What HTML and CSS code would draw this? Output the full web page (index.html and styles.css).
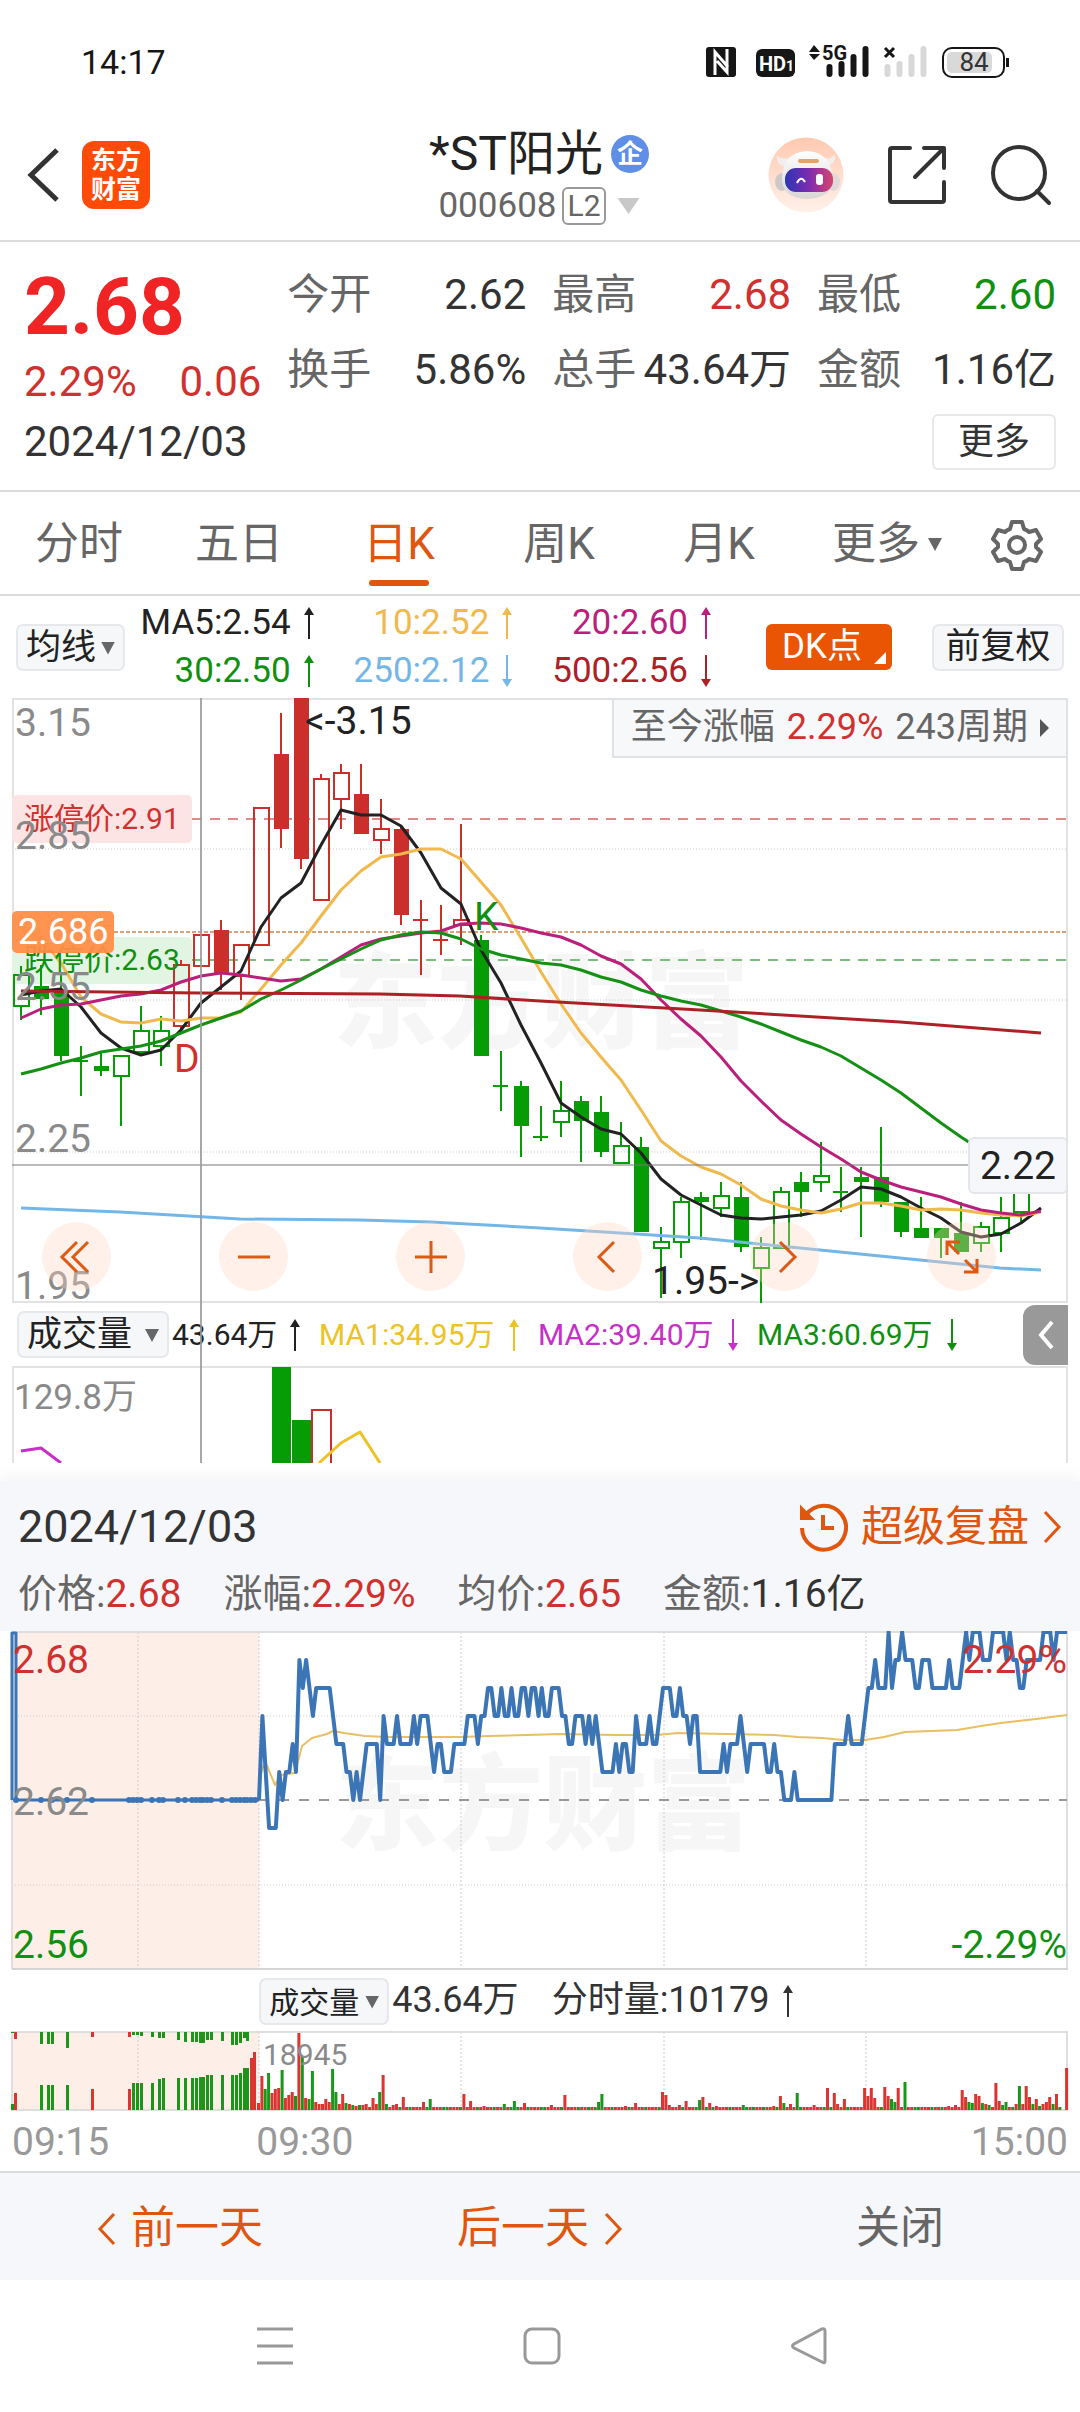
FILE: index.html
```html
<!DOCTYPE html>
<html lang="zh-CN">
<head>
<meta charset="utf-8">
<meta name="viewport" content="width=device-width, initial-scale=1">
<title>*ST阳光 000608</title>
<link rel="stylesheet" href="styles.css">
</head>
<body>
<svg class="sprite" aria-hidden="true">
  <symbol id="up" viewBox="0 0 12 32"><path d="M6 2V32" stroke="currentColor" stroke-width="2"/><path d="M6 0L11 8H1Z" fill="currentColor"/></symbol>
  <symbol id="down" viewBox="0 0 12 32"><path d="M6 0V30" stroke="currentColor" stroke-width="2"/><path d="M6 32L11 24H1Z" fill="currentColor"/></symbol>
  <symbol id="prev" viewBox="0 0 20 34"><path d="M17 2L3 17L17 32" fill="none" stroke="currentColor" stroke-width="3"/></symbol>
  <symbol id="next" viewBox="0 0 20 34"><path d="M3 2L17 17L3 32" fill="none" stroke="currentColor" stroke-width="3"/></symbol>
</svg>

<div class="status">
  <span class="clock">14:17</span>
  <svg class="status-icons" viewBox="0 0 310 36" aria-hidden="true">
    <rect x="1" y="3" width="30" height="30" rx="3" fill="#161616"/>
    <path d="M10 31V8L23 23M22 5V28L12 17" fill="none" stroke="#fff" stroke-width="3"/>
    <rect x="51" y="5" width="39" height="28" rx="6" fill="#161616"/>
    <text class="hd" x="54" y="27">HD</text><text class="hd-sub" x="81" y="27">1</text>
    <path d="M109 1L115 8H104ZM104 10H115L109 16Z" fill="#161616"/>
    <text class="net" x="117" y="16">5G</text>
    <path d="M124.500 23V30M136.500 20V30M148.500 13V30M160.500 5V30" stroke="#161616" stroke-width="6" stroke-linecap="round"/>
    <path d="M180 4L189 13M189 4L180 13" stroke="#161616" stroke-width="3"/>
    <path d="M182.500 23V30M194.500 20V30M206.500 13V30M218.500 5V30" stroke="#d8d8d8" stroke-width="6" stroke-linecap="round"/>
    <rect x="238" y="4" width="61" height="29" rx="9" fill="#fff" stroke="#161616" stroke-width="2"/>
    <rect x="242" y="8" width="45" height="21" rx="5" fill="#d9d9d9"/>
    <path d="M302.500 14V23" stroke="#161616" stroke-width="3"/>
    <text class="batt" x="269" y="27">84</text>
  </svg>
</div>

<header class="header">
  <div class="header-side">
    <button class="icon-btn" aria-label="返回"><svg width="34" height="56" viewBox="0 0 34 56"><path d="M31 3L5 28L31 53" fill="none" stroke="#333" stroke-width="5"/></svg></button>
    <a class="logo" href="#"><span>东方</span><span>财富</span></a>
  </div>
  <div class="header-title">
    <h1>*ST阳光<span class="badge">企</span></h1>
    <button class="code">000608<span class="level">L2</span><i class="tri tri-light"></i></button>
  </div>
  <div class="header-side header-actions">
    <button class="icon-btn" aria-label="智能助手">
      <svg width="76" height="76" viewBox="0 0 76 76">
        <defs>
          <linearGradient id="halo" x1="0" y1="0" x2="0" y2="1"><stop offset="0" stop-color="#ffc9b0"/><stop offset="1" stop-color="#fff1ea"/></linearGradient>
          <linearGradient id="visor"><stop offset="0" stop-color="#2c35b4"/><stop offset=".5" stop-color="#7d2cb0"/><stop offset="1" stop-color="#d8446c"/></linearGradient>
          <linearGradient id="shell" x1="0" y1="0" x2="0" y2="1"><stop offset="0" stop-color="#fff"/><stop offset="1" stop-color="#d9d5d6"/></linearGradient>
        </defs>
        <circle cx="38" cy="38" r="37.500" fill="url(#halo)"/>
        <ellipse cx="14" cy="45" rx="7" ry="9" fill="#cfc8c8"/><ellipse cx="65" cy="45" rx="7" ry="9" fill="#e0d9d9"/>
        <path d="M9 18Q8 29 18 29L24 20Q14 24 9 18ZM67 17Q68 28 60 28L54 20Q63 24 67 17Z" fill="#f3eeee"/>
        <path d="M14 40Q16 15 39 14Q62 15 65 40Q66 61 39 62Q13 61 14 40Z" fill="url(#shell)"/>
        <rect x="30" y="22" width="21" height="4" rx="2" fill="#e0a46c"/>
        <rect x="17" y="31" width="48" height="24" rx="11" fill="url(#visor)"/>
        <path d="M29 46Q33 38 37 45" fill="none" stroke="#fff" stroke-width="2"/><rect x="48" y="37" width="7" height="11" rx="3" fill="#fff"/>
      </svg>
    </button>
    <button class="icon-btn" aria-label="分享"><svg width="60" height="60" viewBox="0 0 60 60" fill="none" stroke="#333" stroke-width="4" stroke-linecap="round" stroke-linejoin="round"><path d="M23 3H5Q3 3 3 5V55Q3 57 5 57H55Q57 57 57 55V37M37 3H57V23M57 3L28 32"/></svg></button>
    <button class="icon-btn" aria-label="搜索"><svg width="62" height="62" viewBox="0 0 62 62" fill="none" stroke="#333" stroke-width="4" stroke-linecap="round"><circle cx="29" cy="29" r="26"/><path d="M47 47L59 59"/></svg></button>
  </div>
</header>

<section class="quote">
  <div class="quote-top">
    <div class="quote-price">
      <strong>2.68</strong>
      <div class="quote-change"><span>2.29%</span><span>0.06</span></div>
    </div>
    <dl class="quote-grid">
      <div><dt>今开</dt><dd>2.62</dd></div>
      <div><dt>最高</dt><dd class="red">2.68</dd></div>
      <div><dt>最低</dt><dd class="green">2.60</dd></div>
      <div><dt>换手</dt><dd>5.86%</dd></div>
      <div><dt>总手</dt><dd>43.64万</dd></div>
      <div><dt>金额</dt><dd>1.16亿</dd></div>
    </dl>
  </div>
  <div class="quote-date"><time>2024/12/03</time><button class="more">更多</button></div>
</section>

<nav class="tabs">
  <button>分时</button><button>五日</button><button class="active">日K</button><button>周K</button><button>月K</button>
  <button>更多<i class="tri"></i></button>
  <button aria-label="设置"><svg width="52" height="52" viewBox="0 0 52 52" fill="none" stroke="#666" stroke-width="4" stroke-linejoin="round"><path d="M21 3H31L33 10Q36 11 38 13L45 11L50 20L45 25V28L50 33L45 42L38 40Q36 42 33 43L31 50H21L19 43Q16 42 14 40L7 42L2 33L7 28V25L2 20L7 11L14 13Q16 11 19 10Z"/><circle cx="26" cy="26" r="8"/></svg></button>
</nav>

<main>
  <div class="ma-bar">
    <label class="picker"><select aria-label="均线指标"><option>均线</option></select></label>
    <div class="ma-grid">
      <span class="c-black">MA5:2.54<svg class="arrow"><use href="#up"/></svg></span>
      <span class="c-yellow">10:2.52<svg class="arrow"><use href="#up"/></svg></span>
      <span class="c-magenta">20:2.60<svg class="arrow"><use href="#up"/></svg></span>
      <span class="green">30:2.50<svg class="arrow"><use href="#up"/></svg></span>
      <span class="c-blue">250:2.12<svg class="arrow"><use href="#down"/></svg></span>
      <span class="c-dark">500:2.56<svg class="arrow"><use href="#down"/></svg></span>
    </div>
    <button class="dk">DK点</button>
    <button class="chip">前复权</button>
  </div>

  <div class="stack">
    <div class="kline">
      <svg id="kline" viewBox="0 698 1080 605" role="img" aria-label="日K线图"></svg>
      <button class="since">至今涨幅 <b>2.29%</b> 243周期<i></i></button>
      <output class="cross-price">2.22</output>
      <div class="tools">
        <button aria-label="最早"><svg viewBox="0 0 36 36"><path d="M18 3L3 18L18 33M29 3L14 18L29 33"/></svg></button>
        <button aria-label="缩小"><svg viewBox="0 0 36 36"><path d="M2 18H34"/></svg></button>
        <button aria-label="放大"><svg viewBox="0 0 36 36"><path d="M2 18H34M18 2V34"/></svg></button>
        <button aria-label="左移"><svg viewBox="0 0 36 36"><path d="M24 3L9 18L24 33"/></svg></button>
        <button aria-label="右移"><svg viewBox="0 0 36 36"><path d="M13 3L28 18L13 33"/></svg></button>
        <button aria-label="全屏"><svg viewBox="0 0 36 36"><path d="M3 16V3H16M3 3L15 15M33 20V33H20M33 33L21 21"/></svg></button>
      </div>
    </div>
    <div class="vol-bar">
      <label class="picker picker-wide"><select aria-label="副图指标"><option>成交量</option></select></label>
      <span class="c-black">43.64万<svg class="arrow"><use href="#up"/></svg></span>
      <span class="c-gold">MA1:34.95万<svg class="arrow"><use href="#up"/></svg></span>
      <span class="c-violet">MA2:39.40万<svg class="arrow"><use href="#down"/></svg></span>
      <span class="green">MA3:60.69万<svg class="arrow"><use href="#down"/></svg></span>
      <button class="drawer" aria-label="展开侧栏"><svg width="16" height="30" viewBox="0 0 16 30"><path d="M14 2L3 15L14 28" fill="none" stroke="#fff" stroke-width="4"/></svg></button>
    </div>
    <svg id="volume" viewBox="0 1366 1080 97" role="img" aria-label="成交量图"></svg>
    <div class="cursor"></div>
  </div>

  <section class="panel">
    <div class="panel-head">
      <time>2024/12/03</time>
      <a class="replay" href="#">
        <svg width="50" height="50" viewBox="0 0 50 50" fill="none" stroke="#e0560f" stroke-width="4"><path d="M8 13A22 22 0 1 1 4 26"/><path d="M25 13V26H36"/><path d="M3 5V17H15Z" fill="#e0560f" stroke-width="2"/></svg>
        超级复盘
        <svg class="chev"><use href="#next"/></svg>
      </a>
    </div>
    <div class="panel-meta">
      <span>价格:<b>2.68</b></span><span>涨幅:<b>2.29%</b></span><span>均价:<b>2.65</b></span><span>金额:<em>1.16亿</em></span>
    </div>
  </section>

  <svg id="intraday" viewBox="0 1631 1080 340" role="img" aria-label="分时图"></svg>
  <div class="minute-bar">
    <label class="picker picker-small"><select aria-label="分时副图指标"><option>成交量</option></select></label>
    <span>43.64万</span><span class="minute-vol">分时量:10179<svg class="arrow"><use href="#up"/></svg></span>
  </div>
  <svg id="minutes" viewBox="0 2031 1080 80" role="img" aria-label="分时成交量图"></svg>
  <div class="times"><span>09:15</span><span>09:30</span><span>15:00</span></div>
</main>

<footer class="pager">
  <button class="accent"><svg class="chev"><use href="#prev"/></svg>前一天</button>
  <button class="accent">后一天<svg class="chev"><use href="#next"/></svg></button>
  <button>关闭</button>
</footer>
<nav class="system" aria-label="系统导航">
  <button aria-label="任务"><svg width="38" height="38" viewBox="0 0 38 38"><path d="M1 2H37M1 19H37M1 36H37"/></svg></button>
  <button aria-label="主页"><svg width="38" height="38" viewBox="0 0 38 38"><rect x="2" y="2" width="34" height="34" rx="7"/></svg></button>
  <button aria-label="后退"><svg width="38" height="38" viewBox="0 0 38 38"><path d="M35 4V34Q35 37 32 35L4 21Q1 19 4 17L32 2Q35 1 35 4Z"/></svg></button>
</nav>
<script src="charts.js"></script>
</body>
</html>
```
FILE: styles.css
```css
* { box-sizing: border-box; }
body { margin: 0; background: #fff; color: #333; font: 36px/1.2 Roboto, "Noto Sans CJK SC", sans-serif; }
button, select { margin: 0; padding: 0; border: 0; background: none; color: inherit; font: inherit; appearance: none; }
a { color: inherit; text-decoration: none; }
h1, dl, dd { margin: 0; font-weight: 400; }
svg { display: block; }
svg text { font-family: Roboto, "Noto Sans CJK SC", sans-serif; }
b, em { font-weight: 400; font-style: normal; }
.sprite { position: absolute; width: 0; height: 0; }

.red { color: #d0312f; }
.green { color: #109010; }
.c-black { color: #222; }
.c-yellow { color: #f0b94e; }
.c-magenta { color: #bb1f7c; }
.c-blue { color: #74b6e6; }
.c-dark { color: #ad2026; }
.c-gold { color: #ecc224; }
.c-violet { color: #c62fc8; }

.status { display: flex; justify-content: space-between; align-items: center; height: 124px; padding: 0 65px 0 81px; }
.clock { font-size: 34px; line-height: 40px; color: #161616; }
.status-icons { width: 310px; height: 36px; }
.hd { font-size: 20px; font-weight: 700; fill: #fff; }
.hd-sub { font-size: 14px; font-weight: 700; fill: #fff; }
.net { font-size: 20px; font-weight: 700; fill: #161616; }
.batt { font-size: 26px; fill: #333; text-anchor: middle; }

.header { display: grid; grid-template-columns: 1fr auto 1fr; align-items: center; height: 118px; padding: 0 28px 18px 26px; border-bottom: 2px solid #dcdcdc; }
.header-side { display: flex; align-items: center; gap: 22px; }
.header-actions { justify-content: flex-end; gap: 43px; }
.icon-btn { display: flex; }
.logo { display: flex; flex-direction: column; align-items: center; justify-content: center; width: 68px; height: 68px; border-radius: 12px; background: #ff4a08; color: #fff; font-size: 25px; font-weight: 700; line-height: 29px; }
.header-title { display: flex; flex-direction: column; align-items: center; gap: 2px; }
h1 { display: flex; align-items: center; gap: 8px; font-size: 48px; line-height: 60px; color: #222; }
.badge { display: flex; align-items: center; justify-content: center; width: 38px; height: 38px; border-radius: 50%; background: #5e8ee6; color: #fff; font-size: 26px; font-weight: 700; line-height: 36px; }
.code { display: flex; align-items: center; gap: 6px; color: #666; font-size: 35px; line-height: 40px; }
.level { padding: 0 3px; border: 2px solid #999; border-radius: 6px; font-size: 30px; line-height: 34px; }
.tri { display: block; width: 14px; height: 13px; background: #666; clip-path: polygon(0 0, 100% 0, 50% 100%); }
.tri-light { width: 22px; height: 16px; margin-left: 6px; background: #c8c8c8; }

.quote { height: 250px; padding: 16px 24px 18px; border-bottom: 2px solid #dcdcdc; font-size: 42px; }
.quote-top { display: flex; gap: 26px; }
.quote-price { width: 23%; color: #d0312f; }
.quote-price strong { display: block; font-size: 80px; font-weight: 700; line-height: 98px; color: #f02424; }
.quote-change { display: flex; justify-content: space-between; line-height: 52px; }
.quote-grid { flex: 1; display: grid; grid-template-columns: repeat(3, 1fr); column-gap: 26px; grid-auto-rows: 75px; }
.quote-grid div { display: flex; justify-content: space-between; align-items: center; white-space: nowrap; }
.quote-grid dt { color: #666; }
.quote-date { display: flex; justify-content: space-between; align-items: center; height: 56px; margin-top: 6px; }
.more { width: 124px; height: 56px; border: 2px solid #e8e8e8; border-radius: 6px; font-size: 36px; line-height: 50px; }

.tabs { display: grid; grid-template-columns: repeat(5, 160fr) 176fr 84fr 20fr; height: 104px; border-bottom: 2px solid #dcdcdc; font-size: 44px; color: #666; }
.tabs button { display: flex; align-items: center; justify-content: center; gap: 8px; padding: 3px 2px 0 0; }
.tabs .active { position: relative; color: #e0560f; }
.tabs .active::after { content: ""; position: absolute; bottom: 8px; width: 60px; height: 6px; border-radius: 3px; background: #e0560f; }

.ma-bar { display: flex; align-items: center; height: 102px; padding: 0 16px; font-size: 35px; }
.picker { position: relative; display: block; height: 47px; border: 2px solid #e6e8ec; border-radius: 7px; background: #f6f7f9; color: #222; }
.picker::after { content: ""; position: absolute; right: 8px; top: 16px; width: 14px; height: 13px; background: #666; clip-path: polygon(0 0, 100% 0, 50% 100%); pointer-events: none; }
.picker select { height: 43px; padding: 0 26px 0 8px; line-height: 43px; }
.ma-grid { flex: 1; display: grid; grid-template-columns: repeat(3, 1fr); margin: 0 54px 0 -9px; line-height: 48px; }
.ma-grid span { display: flex; align-items: center; justify-content: flex-end; gap: 12px; }
.arrow { width: 12px; height: 32px; flex: none; }
.dk { position: relative; width: 126px; height: 46px; margin-right: 40px; padding-right: 14px; border-radius: 6px; background: #ea5504; color: #fff; line-height: 44px; }
.dk::after { content: ""; position: absolute; right: 6px; bottom: 6px; width: 12px; height: 12px; background: #fff; clip-path: polygon(100% 0, 100% 100%, 0 100%); }
.chip { width: 132px; height: 47px; border: 2px solid #e6e8ec; border-radius: 7px; background: #f6f7f9; color: #222; line-height: 42px; }

.stack, .kline { position: relative; }
.stack > svg, .kline > svg, main > svg { width: 100%; height: auto; }
.cursor { position: absolute; top: 0; bottom: 0; left: 18.6%; width: 2px; margin-left: -1px; background: #999; opacity: .85; }
.since { position: absolute; top: 0; right: 12px; display: flex; align-items: center; gap: 12px; height: 60px; padding: 0 17px; border: 2px solid #dfe1e4; background: #f7f8fa; color: #666; font-size: 36px; }
.since b { color: #d0312f; }
.since i { width: 9px; height: 18px; background: #555; clip-path: polygon(0 0, 100% 50%, 0 100%); }
.cross-price { position: absolute; right: 12px; top: 439px; height: 57px; padding: 0 10px; border: 2px solid #e4e6ea; border-radius: 6px; background: #f5f7fa; color: #222; font-size: 39px; line-height: 54px; }
.tools { position: absolute; left: 42px; right: 84px; bottom: 12px; display: flex; justify-content: space-between; }
.tools button { display: flex; align-items: center; justify-content: center; width: 69px; height: 69px; border-radius: 50%; background: rgb(255 214 192 / .35); }
.tools svg { width: 36px; height: 36px; fill: none; stroke: #dd5a14; stroke-width: 3; }

.vol-bar { position: relative; display: grid; grid-template-columns: 155px 147px repeat(3, 219px); align-items: center; height: 63px; padding-left: 17px; font-size: 30px; }
.vol-bar .picker { justify-self: start; font-size: 35px; }
.vol-bar > span { display: flex; align-items: center; justify-content: space-between; padding-right: 18px; white-space: nowrap; }
.picker-wide select { padding-right: 34px; }
.drawer { position: absolute; right: 12px; top: 2px; display: flex; align-items: center; justify-content: center; width: 45px; height: 60px; border-radius: 12px 0 0 12px; background: #999; }

.panel { margin-top: 18px; height: 150px; padding: 18px 18px 0; background: #f6f7fa; box-shadow: 0 -6px 12px rgb(0 0 0 / .04); }
.panel-head { display: flex; justify-content: space-between; align-items: center; height: 56px; font-size: 45px; }
.replay { display: flex; align-items: center; gap: 13px; color: #e0560f; font-size: 42px; }
.chev { width: 20px; height: 34px; }
.panel-meta { display: flex; gap: 42px; padding-top: 14px; font-size: 39px; line-height: 50px; color: #666; }
.panel-meta b { color: #d0312f; }
.panel-meta em { color: #333; }

.minute-bar { display: flex; align-items: center; gap: 3px; height: 60px; padding-left: 24%; font-size: 36px; }
.picker-small select { padding: 0 28px 0 8px; font-size: 30px; }
.minute-vol { display: flex; align-items: center; gap: 12px; margin-left: 30px; }
.times { display: grid; grid-template-columns: 244fr 500fr 311fr; height: 60px; padding: 0 12px; color: #999; font-size: 39px; line-height: 62px; }
.times span:last-child { text-align: right; }

.pager { display: grid; grid-template-columns: repeat(3, 1fr); height: 109px; border-top: 2px solid #dadedb; background: #f6f7fa; color: #666; font-size: 44px; }
.pager button { display: flex; align-items: center; justify-content: center; gap: 14px; padding-top: 4px; }
.pager .accent { color: #e0560f; }
.system { display: flex; justify-content: center; gap: 229px; height: 132px; padding-left: 4px; }
.system button { display: flex; align-items: center; }
.system svg { fill: none; stroke: #999; stroke-width: 3; }

.axis { font-size: 39px; fill: #8a8a8a; }
.note { font-size: 39px; fill: #222; }
.mark { font-size: 104px; font-weight: 900; fill: #f6f6f6; }
.limit { font-size: 30px; }
.up { fill: #d0312f; }
.dn { fill: #109010; }
.end { text-anchor: end; }
```
FILE: charts.js
```js
const RED = '#cc2e2c', GREEN = '#069c06';

const rect = (x, y, w, h, fill, extra = '') =>
  `<rect x="${x}" y="${y}" width="${w}" height="${h}" fill="${fill}" ${extra}/>`;
const line = (x1, y1, x2, y2, stroke, width = 1, dash = '') =>
  `<path d="M${x1} ${y1}L${x2} ${y2}" stroke="${stroke}" stroke-width="${width}" stroke-dasharray="${dash}"/>`;
const curve = (pts, stroke, width = 3) =>
  `<polyline points="${pts.map(p => p.join(',')).join(' ')}" fill="none" stroke="${stroke}" stroke-width="${width}" stroke-linejoin="round"/>`;
const text = (x, y, cls, s, extra = '') => `<text x="${x}" y="${y}" class="${cls}" ${extra}>${s}</text>`;
const daily = ys => ys.map((y, i) => [21 + i * 20, y]);

// Daily candles: high, body top, body bottom, low, kind
// (G/R solid, g/r hollow, x/y flat cross in green/red)
const candles = [
  [966,975,1006,1020,'g'],[965,986,999,1015,'G'],[973,990,1056,1061,'G'],[1046,1061,1061,1096,'x'],
  [1052,1066,1071,1076,'G'],[1056,1056,1076,1126,'g'],[1006,1031,1052,1054,'g'],[1016,1031,1046,1066,'g'],
  [960,965,1026,1030,'r'],[935,935,966,966,'r'],[920,930,973,990,'R'],[945,945,976,1000,'r'],
  [808,808,945,945,'r'],[713,754,829,848,'R'],[698,698,859,869,'R'],[774,779,900,900,'r'],
  [764,773,799,829,'r'],[764,794,834,834,'R'],[799,829,840,854,'r'],[826,829,915,925,'R'],
  [900,920,920,975,'y'],[905,940,940,955,'y'],[824,920,925,945,'r'],[935,940,1056,1056,'G'],
  [1051,1086,1086,1111,'x'],[1081,1086,1126,1157,'G'],[1106,1137,1137,1141,'x'],[1081,1111,1122,1137,'g'],
  [1096,1101,1121,1162,'G'],[1096,1112,1152,1157,'G'],[1122,1146,1163,1163,'g'],[1137,1147,1232,1232,'G'],
  [1227,1242,1248,1298,'g'],[1197,1202,1242,1258,'g'],[1192,1197,1202,1240,'G'],[1182,1196,1208,1217,'g'],
  [1182,1197,1247,1252,'G'],[1237,1248,1268,1303,'g'],[1187,1192,1248,1248,'g'],[1172,1182,1192,1217,'G'],
  [1142,1176,1182,1192,'g'],[1167,1192,1192,1212,'x'],[1167,1177,1182,1237,'G'],[1127,1177,1202,1207,'G'],
  [1202,1202,1232,1237,'G'],[1197,1228,1238,1238,'G'],[1228,1228,1238,1258,'G'],[1202,1233,1252,1252,'G'],
  [1222,1227,1243,1252,'g'],[1197,1218,1233,1252,'g'],[1180,1180,1212,1222,'g'],
];

const ma5 = [995,991,989,1007,1033,1048,1055,1050,1030,1003,987,971,927,898,883,845,810,815,815,826,853,888,904,950,983,1025,1063,1103,1117,1129,1134,1153,1179,1195,1205,1215,1218,1219,1217,1215,1211,1200,1187,1189,1197,1208,1218,1232,1237,1234,1223,1208];
const ma10 = [928,938,963,997,1014,1022,1023,1019,1021,1018,1018,1012,989,965,943,916,890,871,857,854,849,849,859,882,905,938,972,1004,1033,1057,1080,1110,1141,1156,1167,1174,1185,1199,1206,1210,1213,1209,1203,1203,1206,1210,1209,1210,1213,1215,1216,1212];
const ma20 = [1018,1009,1005,1004,1000,996,994,990,982,976,973,975,978,981,979,969,957,945,939,936,933,931,924,923,924,928,933,937,945,956,964,979,1000,1019,1036,1057,1081,1101,1120,1134,1147,1159,1172,1180,1187,1192,1197,1204,1210,1213,1215,1211];
const ma30 = [1074,1069,1063,1058,1052,1049,1046,1041,1033,1025,1018,1011,999,990,980,969,959,949,940,935,932,933,939,949,955,959,963,965,970,977,982,990,996,1001,1005,1011,1017,1024,1032,1040,1047,1056,1068,1080,1093,1108,1123,1137,1150];
const ma250 = [[21,1208],[120,1212],[240,1219],[360,1220],[430,1222],[540,1228],[700,1238],[800,1248],[900,1258],[1000,1268],[1041,1270]];
const ma500 = [[21,991],[200,993],[380,994],[460,996],[540,1001],[700,1010],[900,1022],[1041,1033]];

function candle([high, top, bottom, low, kind], i) {
  const x = 21 + i * 20;
  const c = 'Rry'.includes(kind) ? RED : GREEN;
  if (kind === 'x' || kind === 'y') return line(x, high, x, low, c, 2) + line(x - 8, top, x + 7, top, c, 2);
  if (kind === 'G' || kind === 'R') return line(x, high, x, low, c, 2) + rect(x - 7, top, 15, bottom - top, c);
  return line(x, high, x, top, c, 2) + line(x, bottom, x, low, c, 2) +
    `<rect x="${x - 7}" y="${top}" width="15" height="${bottom - top}" fill="none" stroke="${c}" stroke-width="2"/>`;
}

function drawKline() {
  const grid = [849, 1000, 1152].map(y => line(12, y, 1067, y, '#ccc', 1, '1 2')).join('');
  document.getElementById('kline').innerHTML =
    text(333, 1040, 'mark', '东方财富') + grid +
    `<path d="M13 1303V699H1067V1303" fill="none" stroke="#e2e2e2" stroke-width="2"/>` +
    line(12, 1302, 1068, 1302, '#e2e2e2', 2) +
    line(192, 819, 1067, 819, '#e08a86', 2, '10 8') +
    line(114, 932, 1067, 932, '#d8a27c', 2, '4 2') +
    line(192, 960, 1067, 960, '#7cbf7c', 2, '10 8') +
    rect(12, 795, 180, 48, '#fde4e4', 'rx="5"') + rect(12, 937, 180, 47, '#e2f4e2', 'rx="5"') +
    candles.map(candle).join('') +
    curve(daily(ma5), '#222') + curve(daily(ma10), '#f0b94e') + curve(daily(ma20), '#bb1f7c') +
    curve(daily(ma30), '#159015') + curve(ma250, '#74b6e6') + curve(ma500, '#ad2026') +
    line(12, 1165, 968, 1165, '#777', 1) +
    text(24, 829, 'limit up', '涨停价:2.91') + text(24, 970, 'limit dn', '跌停价:2.63') +
    text(15, 736, 'axis', '3.15') + text(15, 849, 'axis', '2.85') + text(15, 1000, 'axis', '2.55') +
    text(15, 1152, 'axis', '2.25') + text(15, 1299, 'axis', '1.95') +
    rect(12, 911, 102, 42, '#ff8d45', 'rx="5" opacity=".94"') +
    text(18, 944, '', '2.686', 'font-size="36" fill="#fff"') +
    text(305, 734, 'note', '&lt;-3.15') + text(652, 1294, 'note', '1.95-&gt;') +
    text(474, 930, 'note dn', 'K') + text(174, 1072, 'note up', 'D');
}

function drawVolume() {
  document.getElementById('volume').innerHTML =
    `<path d="M13 1463V1367H1067V1463" fill="none" stroke="#e2e2e2" stroke-width="2"/>` +
    rect(272, 1367, 19, 96, GREEN) + rect(292, 1420, 19, 43, GREEN) +
    `<path d="M312 1463V1410H331V1463" fill="none" stroke="${RED}" stroke-width="2"/>` +
    curve([[319,1463],[341,1443],[360,1432],[380,1463]], '#ecc224') +
    curve([[21,1451],[41,1448],[61,1463]], '#c62fc8') +
    text(14, 1409, 'axis', '129.8万', 'style="font-size:35px"');
}

// Intraday price in 0.01 steps over 2.60, as [minute, step] at each turn
const turns = [[0,2],[1,5],[2,3],[3,1],[5,1],[6,3],[7,2],[8,3],[9,3],[10,4],[11,3],[12,7],[13,6],[14,7],[16,5],[17,6],[21,6],[23,4],[25,4],[26,3],[27,3],[28,2],[29,3],[30,2],[32,4],[35,4],[36,2],[37,5],[38,4],[40,4],[41,5],[42,4],[45,4],[46,5],[47,4],[48,5],[50,5],[52,3],[53,4],[54,4],[55,3],[57,3],[58,4],[61,4],[62,5],[64,5],[65,4],[66,5],[67,5],[68,6],[69,6],[70,5],[71,5],[72,6],[73,5],[74,5],[75,6],[76,5],[77,5],[78,6],[79,6],[80,5],[81,6],[82,6],[83,5],[84,6],[85,5],[86,5],[87,6],[89,6],[90,5],[91,5],[92,4],[93,4],[94,5],[96,5],[97,4],[98,5],[99,4],[100,5],[102,3],[105,3],[106,4],[107,3],[108,4],[109,4],[110,3],[111,3],[112,5],[113,4],[115,4],[116,5],[117,4],[118,4],[120,6],[122,6],[123,5],[124,5],[125,6],[126,5],[127,5],[128,4],[129,5],[130,5],[131,3],[137,3],[138,4],[139,3],[140,4],[142,4],[143,5],[145,3],[146,4],[150,4],[151,3],[152,3],[153,4],[154,3],[155,3],[156,2],[158,2],[159,3],[160,2],[170,2],[171,4],[174,4],[175,5],[176,4],[179,4],[181,6],[182,6],[183,7],[184,6],[186,6],[187,8],[188,6],[189,7],[190,7],[191,8],[192,7],[194,7],[195,6],[196,6],[197,7],[199,7],[200,6],[204,6],[205,7],[206,6],[208,6],[210,8],[211,7],[212,8],[214,8],[215,7],[217,7],[218,8],[221,8],[222,7],[223,8],[224,7],[225,7],[226,6],[227,6],[228,7],[232,7],[233,8],[235,8],[236,7],[237,8],[240,8]];
const average = [[259,1780],[265,1761],[275,1785],[281,1775],[295,1773],[302,1746],[312,1738],[327,1734],[333,1731],[344,1733],[365,1736],[386,1737],[420,1737],[461,1737],[489,1736],[527,1735],[560,1734],[616,1735],[657,1735],[678,1733],[774,1735],[798,1737],[822,1738],[843,1740],[865,1740],[884,1737],[905,1732],[957,1730],[981,1726],[1001,1723],[1036,1719],[1067,1715]];
const auctionTicks = [16,41,52,67,92,129,133,137,141,152,159,163,178,185,192,196,200,203,207,211,222,232,236,240,244,247,251,255];

function drawIntraday() {
  const price = turns.map(([m, s]) => [(259 + m * 3.367).toFixed(1), 1856 - s * 28]);
  document.getElementById('intraday').innerHTML =
    rect(12, 1632, 247, 337, '#fdeee8') + text(335, 1842, 'mark', '东方财富') +
    [138, 259, 461, 664, 866].map(x => line(x, 1632, x, 1969, '#ccc', 1, '2 2')).join('') +
    [1716, 1885].map(y => line(12, y, 1067, y, '#ccc', 1, '1 2')).join('') +
    `<path d="M12 1632H1067V1969M12 1632V1969" fill="none" stroke="#dedede" stroke-width="2"/>` +
    line(12, 1969, 1068, 1969, '#d4d4d4', 2) +
    line(259, 1800, 1067, 1800, '#999', 2, '10 10') +
    curve(average, '#e8bf62', 2) +
    curve([[12,1800],[12,1633],[16,1633],[16,1800],[259,1800]], '#3c75b5') +
    auctionTicks.map(x => `<circle cx="${x}" cy="1800" r="3" fill="#3c75b5"/>`).join('') +
    curve(price, '#3c75b5', 4) +
    text(13, 1673, 'axis up', '2.68') + text(13, 1815, 'axis', '2.62') + text(13, 1958, 'axis dn', '2.56') +
    text(1067, 1673, 'axis up end', '2.29%') + text(1067, 1958, 'axis dn end', '-2.29%');
}

// Auction volume: x, unmatched, matched, colour
const auction = [[12,1,6,'g'],[15,7,17,'r'],[41,12,25,'g'],[48,12,25,'g'],[52,12,25,'g'],[67,16,25,'g'],[92,5,21,'r'],[129,5,21,'r'],[133,3,27,'g'],[137,3,27,'g'],[141,4,27,'g'],[152,5,27,'g'],[159,6,31,'g'],[163,6,32,'g'],[178,8,32,'g'],[185,10,32,'g'],[192,10,32,'g'],[196,10,32,'g'],[200,11,33,'g'],[203,11,33,'g'],[207,8,35,'g'],[211,8,35,'g'],[222,9,35,'g'],[232,13,35,'g'],[236,13,35,'g'],[240,11,37,'g'],[244,6,42,'g'],[247,9,42,'g'],[251,0,52,'r'],[254,0,58,'r'],[258,0,7,'r']];
// Minute volume; minutes that are not listed sit at the floor
const peaks = {1:'34r',2:'21g',3:'37g',4:'17r',5:'21r',6:'22r',7:'40g',8:'12r',9:'15r',10:'18r',11:'14g',12:'77r',13:'54g',14:'12r',15:'11g',16:'39g',17:'8r',18:'6r',19:'6r',20:'11r',21:'8r',22:'41g',23:'18g',24:'6r',25:'16r',26:'7g',27:'6r',28:'5g',29:'4r',30:'5g',31:'5r',32:'6r',33:'3r',34:'12r',35:'6r',36:'18g',37:'35r',38:'6g',39:'3r',40:'5r',41:'6r',42:'3g',43:'13r',49:'8r',51:'11g',61:'16r',63:'9r',67:'4r',73:'6g',76:'9g',79:'7r',87:'5r',91:'15r',101:'8g',102:'16g',109:'4r',112:'7r',120:'18r',121:'15r',122:'5r',125:'5r',127:'9r',131:'10g',132:'13r',134:'7r',136:'4r',144:'5g',153:'4r',155:'14r',156:'7g',158:'6r',160:'17g',165:'5r',169:'22r',171:'17r',172:'6r',174:'11r',180:'22r',181:'14r',182:'22r',183:'12r',186:'23r',187:'14r',188:'11g',189:'8g',190:'22r',192:'28g',205:'4r',207:'5r',209:'20r',210:'13r',211:'8g',212:'7g',213:'16r',214:'14r',215:'7g',216:'6r',217:'5g',219:'27r',220:'9r',221:'5g',222:'8g',225:'6r',226:'24g',227:'6r',228:'24r',229:'13r',230:'6g',231:'11r',232:'4g',233:'6r',234:'8r',235:'13r',236:'6g',237:'16r',240:'42r'};

function drawMinutes() {
  const paint = { r: '#dc3431', g: '#1b961b' };
  let bars = auction.map(([x, top, h, c]) =>
    rect(x - 1, 2032, 3, top, paint[c]) + rect(x - 1, 2110 - h, 3, h, paint[c])).join('');
  for (let m = 1; m <= 240; m++) {
    if (m === 239) continue;
    const v = peaks[m] || (m % 5 === 0 || m % 7 === 0 ? '3g' : '3r');
    const h = parseInt(v, 10);
    bars += rect((257 + m * 3.367).toFixed(1), 2110 - h, 3, h, paint[v.slice(-1)]);
  }
  document.getElementById('minutes').innerHTML =
    rect(12, 2032, 247, 78, '#fdeee8') +
    [138, 259, 461, 664, 866].map(x => line(x, 2032, x, 2110, '#ccc', 1, '2 2')).join('') +
    `<path d="M12 2110V2032H1067V2110Z" fill="none" stroke="#dedede" stroke-width="2"/>` + bars +
    text(263, 2065, 'axis', '18945', 'style="font-size:30px"');
}

drawKline();
drawVolume();
drawIntraday();
drawMinutes();
```
